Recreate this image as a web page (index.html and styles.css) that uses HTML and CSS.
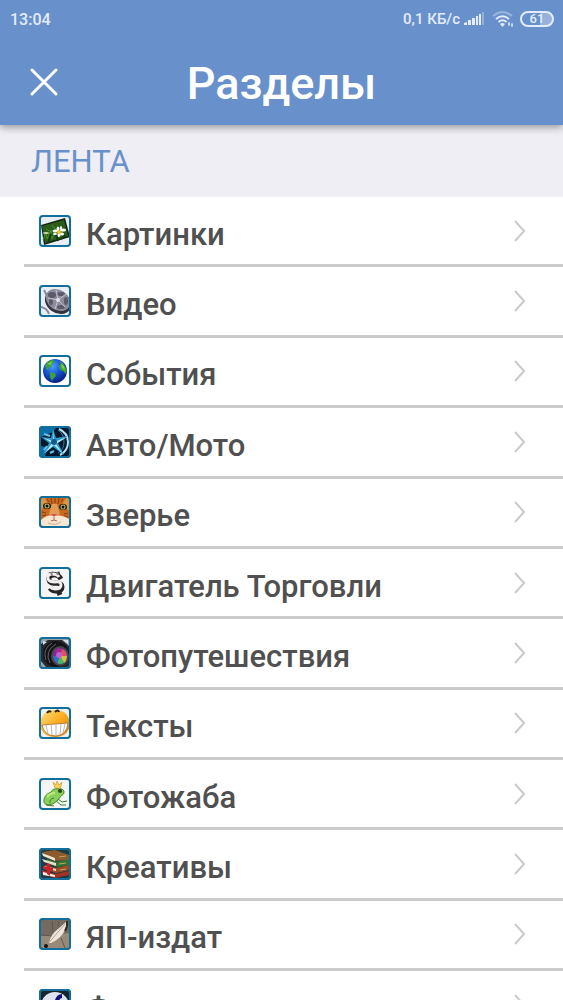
FILE: index.html
```html
<!DOCTYPE html>
<html lang="ru">
<head>
  <meta charset="UTF-8">
  <meta name="viewport" content="width=device-width, initial-scale=1">
  <title>Разделы</title>
  <link rel="stylesheet" href="styles.css">
</head>
<body>
<header class="header">
  <div class="status">
    <span class="clock">13:04</span>
    <span class="speed">0,1 КБ/с</span>
    <svg class="signal" width="20" height="14" viewBox="0 0 20 14" fill="#e3ecf8">
      <path d="M0 13v-2l3-1v3zM4 8h3v5H4zM8 6h3v7H8zM12 4h2v9h-2zM15 2h2v11h-2z"/>
      <path d="M18 0h2v13h-2z" opacity=".35"/>
    </svg>
    <svg class="wifi" width="22" height="16" viewBox="0 0 22 16" fill="none" stroke="#e3ecf8" stroke-width="2">
      <path d="M1 5q9.500-8 19 0" opacity=".4"/>
      <path d="M4 8q6.500-5.500 13 0M6.500 11q4-3.500 8 0"/>
      <path d="M8 13q2.500-2 5 0l-2.500 3z" fill="#e3ecf8" stroke="none"/>
      <path d="M17 11v4M20 12v4M16 13h2M19 14h2" stroke-width="1"/>
    </svg>
    <span class="battery">61</span>
  </div>
  <div class="bar">
    <button class="close" type="button" aria-label="Закрыть">
      <svg width="28" height="28" viewBox="0 0 28 28" fill="none" stroke="#fff" stroke-width="3" stroke-linecap="round">
        <path d="M2 2l24 24M26 2L2 26"/>
      </svg>
    </button>
    <h1>Разделы</h1>
  </div>
</header>

<main class="content">
  <h2 class="section">ЛЕНТА</h2>
  <nav class="list">
    <a class="row" href="#pictures">
      <svg class="icon" viewBox="0 0 32 32">
        <rect width="32" height="32" rx="4" fill="#e7edf3"/>
        <path d="M2 10L26 3l5 19-26 8z" fill="#10240c"/>
        <path d="M3 11L25 5l4 16-23 7z" fill="#2c5c1c"/>
        <path d="M4 25l3-8 1 7 4-9 1 9 4-9 1 8 6-7M7 14l5 3M13 10l4 5" fill="none" stroke="#4d8f2b"/>
        <path d="M9 28l3-9M19 26l-2-7M26 20l-4 4" stroke="#143b10" stroke-width="2"/>
        <g fill="#fff">
          <ellipse cx="19" cy="14" rx="1.500" ry="2.500"/><ellipse cx="20" cy="20" rx="1.500" ry="2"/>
          <ellipse cx="16" cy="16" rx="2.500" ry="1.500"/><ellipse cx="24" cy="15" rx="3" ry="1.500"/>
          <ellipse cx="16" cy="19" rx="2" ry="1"/><ellipse cx="23" cy="19" rx="2" ry="1.500"/>
          <ellipse cx="22" cy="13" rx="1" ry="2"/>
        </g>
        <ellipse cx="7" cy="18" rx="3" ry="1" fill="#c8d8b0"/>
        <circle cx="20" cy="17" r="2" fill="#efc51f"/>
        <rect class="frame" x="1" y="1" width="30" height="30" rx="3"/>
      </svg>
      <span class="name">Картинки</span>
      <svg class="arrow" viewBox="0 0 12 22"><path d="M2 1l9 10-9 10"/></svg>
    </a>
    <a class="row" href="#video">
      <svg class="icon" viewBox="0 0 32 32">
        <rect width="32" height="32" rx="4" fill="#e9eef5"/>
        <path d="M2 22q6 1 8 7M5 5l4 8" fill="none" stroke="#8a8b9f" stroke-width="2"/>
        <ellipse cx="19" cy="17" rx="14" ry="11" fill="#34323e" transform="rotate(35 19 17)"/>
        <ellipse cx="19" cy="15" rx="13" ry="10" fill="#8e8b9e" transform="rotate(35 19 15)"/>
        <g fill="#5c5a68">
          <ellipse cx="13" cy="10" rx="4" ry="3"/><ellipse cx="22" cy="9" rx="4" ry="2"/>
          <ellipse cx="27" cy="16" rx="2" ry="4"/><ellipse cx="22" cy="22" rx="4" ry="2"/>
          <ellipse cx="12" cy="17" rx="2" ry="3"/>
        </g>
        <path d="M19 15L17 5M19 15l8-6M19 15l7 7M19 15l-3 9M19 15L9 13" stroke="#c5c2cf"/>
        <circle cx="19" cy="15" r="2" fill="#e3e0e8"/>
        <rect class="frame" x="1" y="1" width="30" height="30" rx="3"/>
      </svg>
      <span class="name">Видео</span>
      <svg class="arrow" viewBox="0 0 12 22"><path d="M2 1l9 10-9 10"/></svg>
    </a>
    <a class="row" href="#events">
      <svg class="icon" viewBox="0 0 32 32">
        <defs>
          <radialGradient id="sea" cx=".4" cy=".3" r=".7">
            <stop offset="0" stop-color="#4da0ff"/>
            <stop offset=".5" stop-color="#1555d6"/>
            <stop offset="1" stop-color="#071f86"/>
          </radialGradient>
        </defs>
        <rect width="32" height="32" rx="4" fill="#fff"/>
        <circle cx="16" cy="16" r="12" fill="url(#sea)"/>
        <path d="M6 10q3-5 8-5l2 2-3 2-1 3-3 1 1 2-3-1zM11 17l5 1 1 3-3 3-1 2-2-4zM20 6l4 2 4 7-1 4-3-3-3-1-1-4 2-2z" fill="#3ca03d"/>
        <path d="M8 9l5-3-1 4zM22 9l3 2 1 4-3-2z" fill="#7ccc47"/>
        <rect class="frame" x="1" y="1" width="30" height="30" rx="3"/>
      </svg>
      <span class="name">События</span>
      <svg class="arrow" viewBox="0 0 12 22"><path d="M2 1l9 10-9 10"/></svg>
    </a>
    <a class="row" href="#auto">
      <svg class="icon" viewBox="0 0 32 32">
        <rect width="32" height="32" rx="4" fill="#03192b"/>
        <path d="M2 2h15l-3 4-12 5zM2 20l7 2-3 8H2z" fill="#0d6fa5"/>
        <path d="M20 3q9 4 9 13t-8 13" fill="none" stroke="#b7e3f5" stroke-width="2"/>
        <path d="M19 4q6 4 6 12t-6 11" fill="none" stroke="#2482ae"/>
        <path d="M14 3l3 9 12-2-10 7 6 12-11-8-10 7 6-11-8-6 10 1z" fill="#2d98cb"/>
        <path d="M14 4l1 12 13-5-11 7 7 10-9-9-9 8 7-10-8-5 9 3z" fill="#b9e8fa"/>
        <circle cx="15" cy="16" r="3" fill="#125c8c"/>
        <path d="M5 8l6 2M5 24l3-4M11 27l4-2" stroke="#61c2ea" stroke-width="2"/>
        <rect class="frame" x="1" y="1" width="30" height="30" rx="3"/>
      </svg>
      <span class="name">Авто/Мото</span>
      <svg class="arrow" viewBox="0 0 12 22"><path d="M2 1l9 10-9 10"/></svg>
    </a>
    <a class="row" href="#animals">
      <svg class="icon" viewBox="0 0 32 32">
        <rect width="32" height="32" rx="4" fill="#c8691d"/>
        <path d="M2 2h4l2 5-6 7zM30 2h-3l-3 5 6 8z" fill="#dd9445"/>
        <path d="M12 2l1 6M16 2v5M20 2l-1 6M8 3l2 3M24 3l-2 3M3 16l4 1M29 17l-4 1M3 20l4-1M29 21l-4-1" stroke="#8a3c10"/>
        <path d="M13 8h5l3 10-6 3-5-3z" fill="#e39a55"/>
        <path d="M2 24q6-6 13-4 8-2 15 3v8H2z" fill="#f6e6d2"/>
        <path d="M9 27q7 3 13-1" fill="none" stroke="#d3ab88"/>
        <ellipse cx="8" cy="10" rx="4" ry="3" fill="#1a1f12"/>
        <ellipse cx="24" cy="11" rx="4" ry="3" fill="#1a1f12"/>
        <circle cx="8" cy="10" r="2.500" fill="#b3bd78"/>
        <circle cx="24" cy="11" r="2.500" fill="#b3bd78"/>
        <circle cx="8" cy="10" r="1.500" fill="#111"/>
        <circle cx="24" cy="11" r="1.500" fill="#111"/>
        <path d="M12 18h6l-3 3z" fill="#de4a56"/>
        <path d="M15 21v3l-3 1M15 24l3 1" fill="none" stroke="#b06a50"/>
        <rect class="frame" x="1" y="1" width="30" height="30" rx="3"/>
      </svg>
      <span class="name">Зверье</span>
      <svg class="arrow" viewBox="0 0 12 22"><path d="M2 1l9 10-9 10"/></svg>
    </a>
    <a class="row" href="#ads">
      <svg class="icon" viewBox="0 0 32 32">
        <rect width="32" height="32" rx="4" fill="#f3f4f6"/>
        <g fill="none" stroke-linejoin="round">
          <path d="M22 12q-3-5-8-4t-4 5q1 4 7 3 6 0 6 4 0 4-6 4-4 0-6-3M12 5l1 4M18 5l1 4M19 23l2 5" stroke="#282526" stroke-width="5"/>
          <path d="M20 10q-2-3-7-3t-4 5q1 3 7 3 6-1 6 3 0 4-6 4-3 0-5-2" stroke="#f3eef0" stroke-width="3"/>
          <path d="M12 5l1 3M18 5l1 3" stroke="#8b8384" stroke-width="2"/>
        </g>
        <rect class="frame" x="1" y="1" width="30" height="30" rx="3"/>
      </svg>
      <span class="name">Двигатель Торговли</span>
      <svg class="arrow" viewBox="0 0 12 22"><path d="M2 1l9 10-9 10"/></svg>
    </a>
    <a class="row" href="#travel">
      <svg class="icon" viewBox="0 0 32 32">
        <rect width="32" height="32" rx="4" fill="#98a3ab"/>
        <path d="M2 7l7-4h14l7 6v21H7L2 24z" fill="#292a2e"/>
        <path d="M4 4l4 1-4 3zM24 3h5v4z" fill="#d9dfe3"/>
        <ellipse cx="17" cy="17" rx="13" ry="13" fill="#141416"/>
        <path d="M7 23Q3 12 13 6M11 26Q5 14 17 7" fill="none" stroke="#626267"/>
        <ellipse cx="21" cy="19" rx="9" ry="10" fill="#47474c"/>
        <ellipse cx="21" cy="19" rx="7" ry="8" fill="#7b2aa6"/>
        <path d="M21 19l-5-6q3-3 7-1z" fill="#a4258e"/>
        <path d="M21 19l2-7q5 2 5 7z" fill="#e0525f"/>
        <path d="M21 19h7q0 5-3 7z" fill="#d3bd45"/>
        <path d="M21 19l4 7q-4 2-7 0z" fill="#4bb56a"/>
        <path d="M21 19l-3 7q-4-3-4-7z" fill="#2f6fc4"/>
        <circle cx="20" cy="18" r="3" fill="#c05fcc"/>
        <rect class="frame" x="1" y="1" width="30" height="30" rx="3"/>
      </svg>
      <span class="name">Фотопутешествия</span>
      <svg class="arrow" viewBox="0 0 12 22"><path d="M2 1l9 10-9 10"/></svg>
    </a>
    <a class="row" href="#texts">
      <svg class="icon" viewBox="0 0 32 32">
        <defs>
          <linearGradient id="smile" x2="1" y2="1">
            <stop offset="0" stop-color="#ffe37c"/>
            <stop offset=".5" stop-color="#f9ad22"/>
            <stop offset="1" stop-color="#df7910"/>
          </linearGradient>
        </defs>
        <rect width="32" height="32" rx="4" fill="#eff1ee"/>
        <path d="M2 12Q5 3 16 3t14 9v10q-4 8-14 8T2 22z" fill="url(#smile)"/>
        <path d="M3 18q13-1 26-2-1 12-12 13Q5 29 3 18z" fill="#fff" stroke="#c07a35"/>
        <path d="M7 18l2 9M12 17l1 11M17 17v12M22 17l-1 11M26 17l-2 9" stroke="#b9b5b0"/>
        <path d="M8 6q2-3 4-1M16 5q3-3 4 0" fill="none" stroke="#30220f" stroke-width="2"/>
        <rect class="frame" x="1" y="1" width="30" height="30" rx="3"/>
      </svg>
      <span class="name">Тексты</span>
      <svg class="arrow" viewBox="0 0 12 22"><path d="M2 1l9 10-9 10"/></svg>
    </a>
    <a class="row" href="#photofrog">
      <svg class="icon" viewBox="0 0 32 32">
        <rect width="32" height="32" rx="4" fill="#f4f5f5"/>
        <path d="M14 4l3 3 1-4 2 4 3-3-2 7-5-1z" fill="#f8d24e" stroke="#e0ac50"/>
        <path d="M5 22q0-5 7-8 2-4 7-3 5-1 6 2 1 3-3 5l-4 5q-4 4-9 4-5-1-4-5z" fill="#8bd058" stroke="#4a8a33"/>
        <path d="M8 19q3-4 8-4" fill="none" stroke="#b7eb83" stroke-width="2"/>
        <path d="M17 23l5 4h5M19 21l4 3 5-1M7 27l8 1M15 20q-5 1-4 5" fill="none" stroke="#3f7c2a"/>
        <circle cx="21" cy="13" r="2" fill="#28451e"/>
        <rect class="frame" x="1" y="1" width="30" height="30" rx="3"/>
      </svg>
      <span class="name">Фотожаба</span>
      <svg class="arrow" viewBox="0 0 12 22"><path d="M2 1l9 10-9 10"/></svg>
    </a>
    <a class="row" href="#creative">
      <svg class="icon" viewBox="0 0 32 32">
        <rect width="32" height="32" rx="4" fill="#203b41"/>
        <path d="M3 4l13-2 14 5v5l-14 1z" fill="#8c5a2d"/>
        <path d="M3 5l13 5v3L4 8z" fill="#f0e5d1"/>
        <path d="M8 11l9 3 13-3v6l-12 2-10-4z" fill="#367334"/>
        <path d="M3 11l14 4v3L5 14z" fill="#e4ddc7"/>
        <path d="M6 17l11 3 13-3v5l-13 3-12-4z" fill="#9d4e25"/>
        <path d="M5 18l12 3v2L5 20z" fill="#f0dfcb"/>
        <path d="M3 22l13 4 14-3v4l-14 3-13-4z" fill="#a53024"/>
        <path d="M4 24l12 3v2L4 27z" fill="#fff0e8"/>
        <path d="M8 15l3 1v12l-3-2zM4 18l10 2v3L4 21z" fill="#cc1e2b"/>
        <path d="M20 9l7-1M20 16l7-1M21 22l6-1" stroke="#c3a45a"/>
        <rect class="frame" x="1" y="1" width="30" height="30" rx="3"/>
      </svg>
      <span class="name">Креативы</span>
      <svg class="arrow" viewBox="0 0 12 22"><path d="M2 1l9 10-9 10"/></svg>
    </a>
    <a class="row" href="#publish">
      <svg class="icon" viewBox="0 0 32 32">
        <rect width="32" height="32" rx="4" fill="#756a5f"/>
        <path d="M2 18l28-3v15H2z" fill="#988979"/>
        <path d="M2 17l13 1M13 3l1 12M22 20l4 10M20 3l-1 5" stroke="#62564c"/>
        <path d="M10 25q2-9 9-14l8-7q1 6-2 10-4 7-13 11z" fill="#ede5da"/>
        <path d="M7 28L26 6" stroke="#b5a495"/>
        <path d="M28 3q1 5-2 10" fill="none" stroke="#332922" stroke-width="2"/>
        <circle cx="7" cy="28" r="2" fill="#17120f"/>
        <rect class="frame" x="1" y="1" width="30" height="30" rx="3"/>
      </svg>
      <span class="name">ЯП-издат</span>
      <svg class="arrow" viewBox="0 0 12 22"><path d="M2 1l9 10-9 10"/></svg>
    </a>
    <a class="row" href="#flash">
      <svg class="icon" viewBox="0 0 32 32">
        <rect width="32" height="32" rx="4" fill="#17242c"/>
        <ellipse cx="16" cy="17" rx="14" ry="14" fill="#dfe3ee"/>
        <path d="M23 7q-5 0-6 9-1 8-7 9M13 16h8" fill="none" stroke="#10107c" stroke-width="4"/>
        <rect class="frame" x="1" y="1" width="30" height="30" rx="3"/>
      </svg>
      <span class="name">Флэш</span>
      <svg class="arrow" viewBox="0 0 12 22"><path d="M2 1l9 10-9 10"/></svg>
    </a>
  </nav>
</main>
</body>
</html>
```
FILE: styles.css
```css
* {
  box-sizing: border-box;
}
body {
  margin: 0;
  height: 100vh;
  display: flex;
  flex-direction: column;
  overflow: hidden;
  background: #fff;
  font-family: Roboto, "Noto Sans", sans-serif;
  font-weight: 500;
}
h1, h2 {
  margin: 0;
  font-weight: 500;
}
.header {
  flex: none;
  position: relative;
  z-index: 1;
  background: #6891cc;
  color: #fff;
  box-shadow: 0 2px 8px rgba(0, 0, 0, 0.4);
}
.status {
  display: flex;
  align-items: center;
  height: 38px;
  padding: 0 9px 0 10px;
  color: #e3ecf8;
  font-size: 16px;
}
.clock {
  margin-right: auto;
}
.speed {
  font-size: 15px;
}
.signal {
  margin-left: 4px;
}
.wifi {
  margin: 0 6px 0 8px;
}
.battery {
  width: 34px;
  height: 16px;
  border: 2px solid #e3ecf8;
  border-radius: 8px;
  background: linear-gradient(to right, transparent 60%, rgba(255, 255, 255, 0.3) 60%);
  font-size: 13px;
  line-height: 12px;
  text-align: center;
}
.bar {
  display: grid;
  grid-template-columns: 88px 1fr 88px;
  align-items: center;
  height: 87px;
}
.bar h1 {
  padding-top: 4px;
  font-size: 45px;
  line-height: 56px;
  text-align: center;
}
.close {
  display: flex;
  align-items: center;
  justify-content: center;
  height: 86px;
  padding: 0;
  border: none;
  background: none;
  cursor: pointer;
}
.content {
  flex: 1;
  min-height: 0;
  overflow-y: auto;
  scrollbar-width: none;
}
.section {
  height: 72px;
  padding: 0 31px;
  background: #efeef4;
  color: #6891cc;
  font-size: 31px;
  font-weight: 400;
  line-height: 74px;
}
.list {
  display: grid;
  grid-auto-rows: 12.5vw;
  padding-left: 24px;
}
.row {
  display: flex;
  align-items: center;
  padding: 0 38px 0 15px;
  border-bottom: 3px solid #cbcbcb;
  color: #505050;
  text-decoration: none;
}
.icon {
  flex: none;
  width: 32px;
  height: 32px;
}
.frame {
  fill: none;
  stroke: #126f9b;
  stroke-width: 2;
}
/* the label sits a little lower than its icon */
.name {
  flex: 1;
  margin-left: 15px;
  padding-top: 8px;
  font-size: 31px;
  line-height: 38px;
  white-space: nowrap;
}
.arrow {
  flex: none;
  width: 12px;
  height: 22px;
  fill: none;
  stroke: #cbcbcb;
  stroke-width: 2;
}
```
